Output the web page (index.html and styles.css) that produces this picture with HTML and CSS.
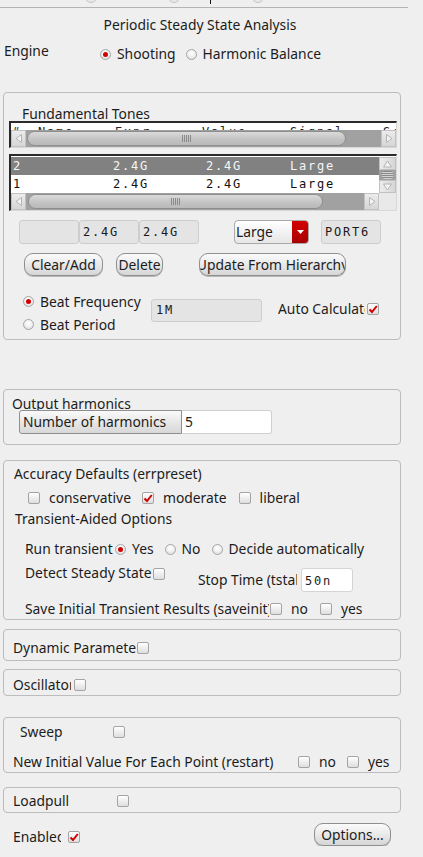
FILE: index.html
```html
<!DOCTYPE html>
<html>
<head>
<meta charset="utf-8">
<link rel="stylesheet" href="styles.css">
</head>
<body>
<div class="page">
  <div class="top-strip">
    <span class="radio stub s1"></span>
    <span class="radio stub s2"></span>
    <span class="caret"></span>
    <span class="radio stub s3"></span>
  </div>
  <div class="title">Periodic Steady State Analysis</div>
  <div class="engine-row">
    <div class="engine-label">Engine</div>
    <div class="engine-opts">
      <span class="opt"><span class="radio on"></span>Shooting</span>
      <span class="opt opt-hb"><span class="radio"></span>Harmonic Balance</span>
    </div>
  </div>

  <section class="group g-tones">
    <div class="tones-label">Fundamental Tones</div>
    <div class="list hdr">
      <div class="hdr-text mono">
        <span class="hc c0">#</span><span class="hc c1">Name</span><span class="hc c2">Expr</span><span class="hc c3">Value</span><span class="hc c4">Signal</span><span class="hc c5">S:</span>
      </div>
      <div class="hscroll">
        <div class="sb-btn"><svg width="8" height="9" viewBox="0 0 8 9"><path d="M6.5 0.5 L1 4.5 L6.5 8.5 Z" fill="#f4f4f4" stroke="#b4b4b4"/></svg></div>
        <div class="sb-handle h-hdr"><span class="grip"></span></div>
        <div class="sb-track"></div>
        <div class="sb-btn"><svg width="8" height="9" viewBox="0 0 8 9"><path d="M1.5 0.5 L7 4.5 L1.5 8.5 Z" fill="#f4f4f4" stroke="#b4b4b4"/></svg></div>
      </div>
    </div>
    <div class="list body">
      <div class="list-main">
        <div class="rows mono">
          <div class="row sel"><span class="rc r0">2</span><span class="rc r1">2.4G</span><span class="rc r2">2.4G</span><span class="rc r3">Large</span></div>
          <div class="row"><span class="rc r0">1</span><span class="rc r1">2.4G</span><span class="rc r2">2.4G</span><span class="rc r3">Large</span></div>
        </div>
        <div class="vscroll">
          <div class="vs-btn"><svg width="9" height="8" viewBox="0 0 9 8"><path d="M0.5 7 L4.5 1 L8.5 7 Z" fill="#f4f4f4" stroke="#b4b4b4"/></svg></div>
          <div class="vs-grip"></div>
          <div class="vs-btn"><svg width="9" height="8" viewBox="0 0 9 8"><path d="M0.5 1 L4.5 7 L8.5 1 Z" fill="#f4f4f4" stroke="#b4b4b4"/></svg></div>
        </div>
      </div>
      <div class="hs-row">
        <div class="hscroll hs-body">
          <div class="sb-btn"><svg width="8" height="9" viewBox="0 0 8 9"><path d="M6.5 0.5 L1 4.5 L6.5 8.5 Z" fill="#f4f4f4" stroke="#b4b4b4"/></svg></div>
          <div class="sb-handle h-body"><span class="grip"></span></div>
          <div class="sb-track"></div>
          <div class="sb-btn"><svg width="8" height="9" viewBox="0 0 8 9"><path d="M1.5 0.5 L7 4.5 L1.5 8.5 Z" fill="#f4f4f4" stroke="#b4b4b4"/></svg></div>
        </div>
        <div class="corner"></div>
      </div>
    </div>

    <div class="inputs-row">
      <div class="field f-empty"></div>
      <div class="field f-val mono">2.4G</div>
      <div class="field f-val mono">2.4G</div>
      <div class="combo"><span class="combo-text">Large</span><span class="combo-arrow"><svg width="7" height="4" viewBox="0 0 7 4"><path d="M0 0 L7 0 L3.5 4 Z" fill="#fff"/></svg></span></div>
      <div class="field f-port mono">PORT6</div>
    </div>

    <div class="buttons-row">
      <div class="btn b-clear">Clear/Add</div>
      <div class="btn b-delete">Delete</div>
      <div class="btn b-update"><span>Update From Hierarchy</span></div>
    </div>

    <div class="beat">
      <div class="beat-opts">
        <div class="opt beat-opt"><span class="radio on"></span>Beat Frequency</div>
        <div class="opt beat-opt"><span class="radio"></span>Beat Period</div>
      </div>
      <div class="field f-beat mono">1M</div>
      <div class="auto"><span class="clip auto-label">Auto Calculate</span><span class="check on"><svg width="10" height="9" viewBox="0 0 10 9"><path d="M1.5 4.5 L4 7 L8.8 1" fill="none" stroke="#d20000" stroke-width="2"/></svg></span></div>
    </div>
  </section>

  <section class="group g-out">
    <div class="out-label">Output harmonics</div>
    <div class="out-row">
      <div class="out-btn">Number of harmonics</div>
      <div class="out-input">5</div>
    </div>
  </section>

  <section class="group g-acc">
    <div class="acc-title">Accuracy Defaults (errpreset)</div>
    <div class="acc-checks">
      <span class="check"></span><span class="ck-text">conservative</span>
      <span class="check on ck2"><svg width="10" height="9" viewBox="0 0 10 9"><path d="M1.5 4.5 L4 7 L8.8 1" fill="none" stroke="#d20000" stroke-width="2"/></svg></span><span class="ck-text">moderate</span>
      <span class="check ck3"></span><span class="ck-text">liberal</span>
    </div>
    <div class="tr-title">Transient-Aided Options</div>
    <div class="run-row">
      <span class="clip run-label">Run transient</span>
      <span class="radio on"></span><span class="rt">Yes</span>
      <span class="radio r-no"></span><span class="rt">No</span>
      <span class="radio r-auto"></span><span class="rt">Decide automatically</span>
    </div>
    <div class="detect-row">
      <span class="clip detect-label">Detect Steady State</span>
      <span class="check detect-check"></span>
      <span class="clip stop-label">Stop Time (tstab)</span>
      <span class="stop-input mono">50n</span>
    </div>
    <div class="save-row">
      <span class="clip save-label">Save Initial Transient Results (saveinit)</span>
      <span class="check"></span><span class="rt">no</span>
      <span class="check s-yes"></span><span class="rt">yes</span>
    </div>
  </section>

  <section class="group g-dyn">
    <div class="line-row"><span class="clip dyn-label">Dynamic Parameter</span><span class="check"></span></div>
  </section>

  <section class="group g-osc">
    <div class="line-row"><span class="clip osc-label">Oscillator</span><span class="check"></span></div>
  </section>

  <section class="group g-sweep">
    <div class="line-row"><span class="sweep-label">Sweep</span><span class="check"></span></div>
    <div class="line-row restart-row">
      <span class="restart-label">New Initial Value For Each Point (restart)</span>
      <span class="check"></span><span class="rt">no</span>
      <span class="check s-yes2"></span><span class="rt">yes</span>
    </div>
  </section>

  <section class="group g-load">
    <div class="line-row"><span class="load-label">Loadpull</span><span class="check"></span></div>
  </section>

  <div class="enabled-row">
    <div class="en-left"><span class="clip en-label">Enabled</span><span class="check on"><svg width="10" height="9" viewBox="0 0 10 9"><path d="M1.5 4.5 L4 7 L8.8 1" fill="none" stroke="#d20000" stroke-width="2"/></svg></span></div>
    <div class="btn b-options">Options...</div>
  </div>
</div>
</body>
</html>
```
FILE: styles.css
```css
html, body {
  margin: 0;
  padding: 0;
  background: #efefef;
}
body {
  font-family: "Noto Sans", "DejaVu Sans", sans-serif;
  font-size: 13.85px;
  color: #1c1c1c;
}
.page {
  width: 408px;
}
.mono {
  font-family: "DejaVu Sans Mono", "Liberation Mono", monospace;
  font-size: 12px;
  letter-spacing: 1.8px;
}
.clip {
  display: inline-block;
  overflow: hidden;
  white-space: nowrap;
}

/* radios & checks */
.radio {
  display: inline-block;
  box-sizing: border-box;
  width: 11px;
  height: 11px;
  border-radius: 50%;
  border: 1px solid #a6a6a6;
  background: radial-gradient(circle at 50% 35%, #ffffff 0%, #f2f2f2 45%, #d4d4d4 100%);
  position: relative;
  flex: none;
}
.radio.on::after {
  content: "";
  position: absolute;
  left: 2px;
  top: 2px;
  width: 5px;
  height: 5px;
  border-radius: 50%;
  background: #d00000;
}
.check {
  display: inline-flex;
  align-items: center;
  justify-content: center;
  box-sizing: border-box;
  width: 12px;
  height: 12px;
  border: 1px solid #a4a4a4;
  border-radius: 2px;
  background: linear-gradient(#ffffff, #dedede);
  flex: none;
}
.opt {
  display: inline-flex;
  align-items: center;
}
.opt .radio {
  margin-right: 6px;
}

/* top */
.top-strip {
  height: 7px;
  overflow: hidden;
  display: flex;
  align-items: flex-start;
  border-bottom: 1px solid #b4b4b4;
}
.stub {
  margin-top: -9px;
  width: 12px;
  height: 12px;
  background: #e8e8e8;
  border-color: #c4c4c4;
}
.s1 { margin-left: 85px; }
.s2 { margin-left: 71px; }
.caret {
  width: 1px;
  height: 4px;
  background: #111;
  margin-left: 30px;
}
.s3 { margin-left: 41px; }

.title {
  width: 400px;
  text-align: center;
  line-height: 18px;
  margin-top: 8px;
}
.engine-row {
  display: flex;
  margin-top: 8px;
  height: 21px;
}
.engine-label {
  width: 96px;
  padding-left: 4px;
  line-height: 18px;
}
.engine-opts {
  padding-top: 3px;
  line-height: 18px;
  display: flex;
}
.opt-hb {
  margin-left: 10px;
}

/* groups */
.group {
  box-sizing: border-box;
  width: 398px;
  margin-left: 3px;
  border: 1px solid #bcbcbc;
  border-radius: 4px;
}
.g-tones {
  margin-top: 29px;
  padding: 13px 0 3px 0;
}
.tones-label {
  line-height: 15px;
  padding-left: 18px;
}

.list {
  box-sizing: border-box;
  width: 388px;
  margin-left: 5px;
  background: #fff;
  border-top: 2px solid #2a2a2a;
  border-left: 2px solid #2a2a2a;
  border-right: 1px solid #d8d8d8;
  border-bottom: 1px solid #d8d8d8;
}
.hdr {
  height: 27px;
}
.hdr-text {
  height: 7px;
  overflow: hidden;
  display: flex;
  line-height: 16px;
  white-space: nowrap;
  color: #222;
}
.hdr-text .hc {
  display: inline-block;
  margin-top: 1px;
}
.c0 { width: 26px; padding-left: 1px; }
.c1 { width: 77px; }
.c2 { width: 87px; }
.c3 { width: 88px; }
.c4 { width: 93px; }
.c5 { width: 10px; }

.hscroll {
  display: flex;
  height: 17px;
  background: #a1a1a1;
}
.sb-btn {
  width: 15px;
  flex: none;
  display: flex;
  align-items: center;
  justify-content: center;
  background: linear-gradient(#ececec, #d6d6d6);
  box-sizing: border-box;
  border: 1px solid #c2c2c2;
}
.sb-handle {
  box-sizing: border-box;
  flex: none;
  margin: 1px 0 1px 1px;
  border-radius: 8px;
  border: 1px solid #8d8d8d;
  background: linear-gradient(#dadada, #c2c2c2 60%, #b9b9b9);
  display: flex;
  align-items: center;
  justify-content: center;
}
.h-hdr { width: 319px; }
.h-body { width: 295px; margin-left: 2px; }
.grip {
  width: 9px;
  height: 7px;
  background: repeating-linear-gradient(90deg, #8a8a8a 0 1px, transparent 1px 2px);
}
.sb-track {
  flex: 1;
}

.body {
  margin-top: 6px;
  padding-top: 1px;
}
.list-main {
  display: flex;
  height: 36px;
}
.rows {
  width: 368px;
  flex: none;
}
.row {
  height: 18px;
  line-height: 19px;
  display: flex;
  white-space: nowrap;
  color: #111;
}
.row.sel {
  background: #818181;
  color: #f6f6f6;
}
.rc { display: inline-block; }
.r0 { width: 100px; padding-left: 2px; }
.r1 { width: 93px; }
.r2 { width: 84px; }
.r3 { width: 60px; }

.vscroll {
  width: 17px;
  flex: none;
  display: flex;
  flex-direction: column;
  background: #a1a1a1;
}
.vs-btn {
  height: 13px;
  box-sizing: border-box;
  border: 1px solid #c2c2c2;
  background: linear-gradient(90deg, #ececec, #d6d6d6);
  display: flex;
  align-items: center;
  justify-content: center;
}
.vs-grip {
  flex: 1;
  margin: 1px 3px;
  background: repeating-linear-gradient(180deg, #8a8a8a 0 1px, #d4d4d4 1px 2px);
  border-radius: 3px;
}
.hs-row {
  display: flex;
}
.hs-body {
  width: 368px;
}
.corner {
  flex: 1;
  background: #e9e9e9;
}

/* input row */
.inputs-row {
  display: flex;
  align-items: center;
  height: 24px;
  margin: 9px 0 0 15px;
}
.field {
  box-sizing: border-box;
  height: 24px;
  line-height: 22px;
  background: #e4e4e4;
  border: 1px solid #cdcdcd;
  border-radius: 3px;
  padding-left: 3px;
  white-space: nowrap;
  color: #1a1a1a;
}
.f-empty, .f-val { width: 60px; }
.combo {
  box-sizing: border-box;
  width: 75px;
  height: 24px;
  margin-left: 35px;
  display: flex;
  border: 1px solid #a9a9a9;
  border-radius: 4px;
  overflow: hidden;
  background: linear-gradient(#ffffff, #e6e6e6);
}
.combo-text {
  flex: 1;
  line-height: 22px;
  padding-left: 1px;
}
.combo-arrow {
  width: 16px;
  background: linear-gradient(#d40000, #a80000);
  display: flex;
  align-items: center;
  justify-content: center;
}
.f-port {
  width: 60px;
  margin-left: 12px;
}

/* buttons */
.buttons-row {
  display: flex;
  margin: 9px 0 0 20px;
  height: 23px;
}
.btn {
  box-sizing: border-box;
  height: 23px;
  line-height: 21px;
  border: 1px solid #8f8f8f;
  border-radius: 9px;
  background: linear-gradient(#fbfbfb, #e9e9e9 50%, #d6d6d6);
  box-shadow: 0 1px 0 #b8b8b8;
  display: flex;
  justify-content: center;
  overflow: hidden;
  white-space: nowrap;
  color: #1c1c1c;
}
.b-clear { width: 79px; }
.b-delete { width: 47px; margin-left: 13px; }
.b-update { width: 147px; margin-left: 36px; }
.b-update span { flex: none; }

/* beat */
.beat {
  display: flex;
  align-items: flex-start;
  margin-top: 14px;
  padding-left: 15px;
}
.beat-opts {
  width: 132px;
}
.beat-opt {
  height: 23px;
  display: flex;
  padding-left: 4px;
}
.f-beat {
  width: 111px;
  height: 23px;
  line-height: 21px;
  margin-top: 9px;
  padding-left: 4px;
}
.auto {
  display: flex;
  align-items: center;
  margin-left: 16px;
  margin-top: 10px;
  line-height: 18px;
}
.auto-label {
  width: 87px;
}
.auto .check {
  margin-left: 2px;
}

/* output harmonics */
.g-out {
  margin-top: 49px;
  padding: 7px 0 10px 0;
}
.out-label {
  height: 13px;
  line-height: 14px;
  padding-left: 8px;
}
.out-row {
  display: flex;
  margin-left: 15px;
  height: 24px;
}
.out-btn {
  box-sizing: border-box;
  width: 163px;
  height: 24px;
  line-height: 22px;
  padding-left: 3px;
  border: 1px solid #8f8f8f;
  border-radius: 3px 0 0 3px;
  background: linear-gradient(#fafafa, #e4e4e4 60%, #d8d8d8);
}
.out-input {
  box-sizing: border-box;
  width: 90px;
  height: 24px;
  line-height: 22px;
  padding-left: 3px;
  background: #fff;
  border: 1px solid #cfcfcf;
  border-left: none;
  border-radius: 0 3px 3px 0;
}

/* accuracy */
.g-acc {
  margin-top: 15px;
  padding: 4px 0 1px 0;
  line-height: 18px;
}
.acc-title {
  padding-left: 10px;
}
.acc-checks {
  display: flex;
  align-items: center;
  margin: 6px 0 0 24px;
}
.ck-text { margin-left: 9px; }
.ck2 { margin-left: 11px; }
.ck3 { margin-left: 12px; }
.tr-title {
  margin: 3px 0 0 11px;
}
.run-row {
  display: flex;
  align-items: center;
  margin: 12px 0 0 21px;
}
.run-label { width: 88px; }
.run-row .radio { margin-left: 2px; }
.rt { margin-left: 6px; }
.run-row .r-no { margin-left: 11px; }
.run-row .r-auto { margin-left: 11px; }
.detect-row {
  display: flex;
  align-items: flex-start;
  margin: 6px 0 0 21px;
  height: 28px;
}
.detect-label { width: 127px; }
.detect-check { margin-top: 4px; margin-left: 1px; }
.stop-label {
  width: 99px;
  margin-left: 33px;
  margin-top: 7px;
}
.stop-input {
  box-sizing: border-box;
  width: 52px;
  height: 24px;
  line-height: 24px;
  margin-left: 4px;
  margin-top: 4px;
  padding-left: 3px;
  background: #fff;
  border: 1px solid #d4d4d4;
  border-radius: 3px;
}
.save-row {
  display: flex;
  align-items: center;
  margin: 8px 0 0 21px;
}
.save-label { width: 244px; margin-right: 1px; }
.save-row .rt { margin-left: 9px; }
.save-row .s-yes { margin-left: 12px; }

/* small groups */
.line-row {
  display: flex;
  align-items: center;
  line-height: 18px;
  padding-left: 9px;
}
.g-dyn {
  margin-top: 9px;
  padding: 9px 0 3px 0;
}
.dyn-label { width: 123px; margin-right: 1px; }
.g-osc {
  margin-top: 8px;
  padding: 6px 0 1px 0;
}
.osc-label { width: 58px; margin-right: 3px; }
.g-sweep {
  margin-top: 21px;
  padding: 5px 0 1px 0;
}
.sweep-label {
  width: 93px;
  margin-left: 7px;
}
.restart-row {
  margin-top: 12px;
}
.restart-label { width: 285px; white-space: nowrap; }
.restart-row .rt { margin-left: 9px; }
.restart-row .s-yes2 { margin-left: 11px; }
.g-load {
  margin-top: 14px;
  padding: 4px 0 2px 0;
}
.load-label { width: 104px; }

.enabled-row {
  display: flex;
  justify-content: space-between;
  align-items: center;
  width: 391px;
  box-sizing: border-box;
  padding-left: 13px;
  margin-top: 10px;
  height: 23px;
}
.en-left {
  display: flex;
  align-items: center;
  line-height: 18px;
  margin-top: 5px;
}
.en-label { width: 48px; margin-right: 7px; }
.b-options { width: 77px; }
```
